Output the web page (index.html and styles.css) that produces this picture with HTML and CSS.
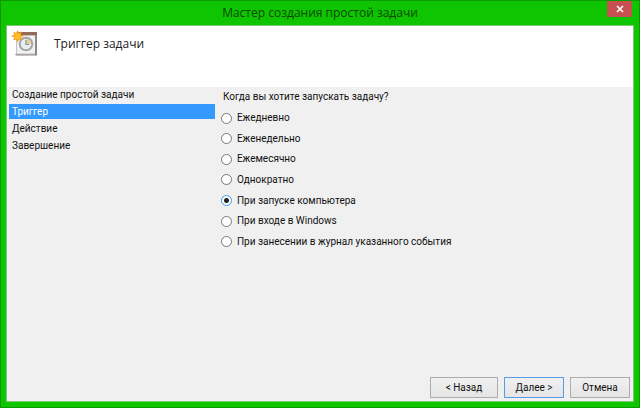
FILE: index.html
```html
<!DOCTYPE html>
<html lang="ru">
<head>
    <meta charset="UTF-8">
    <meta name="viewport" content="width=device-width, initial-scale=1.0">
    <title>Мастер создания простой задачи</title>
    <link rel="stylesheet" href="styles.css">
</head>
<body>
    <form class="window">
        <div class="titlebar">
            <h1 class="window-title">Мастер создания простой задачи</h1>
            <button type="button" class="close" aria-label="Закрыть">
                <svg width="8" height="8" viewBox="0 0 8 8"><path d="M1 1L7 7M7 1L1 7" stroke="#fff" stroke-width="1.6"/></svg>
            </button>
        </div>

        <div class="client">
            <header class="header">
                <svg class="task-icon" width="28" height="28" viewBox="0 0 28 28">
                    <path d="M4 24L5 25.5H26V24Z" fill="#8a8886"/>
                    <rect x="5.5" y="3.5" width="19" height="20.5" fill="#f3f2f1" stroke="#c4c1bf"/>
                    <path d="M24 4H26V25H24Z" fill="#8d8886"/>
                    <rect x="6" y="2" width="20" height="3" fill="#946a5b"/>
                    <path d="M6 5.5H24" stroke="#cdbab2"/>
                    <circle cx="15" cy="14" r="6.3" fill="#e9eef2" stroke="#a3a6a8" stroke-width="2"/>
                    <path d="M15 14V9A5 5 0 0 1 20 14Z" fill="#ead48c"/>
                    <path d="M15 10V14.5H18" fill="none" stroke="#7c93ab" stroke-width="1.2"/>
                    <path d="M6.5 0L7.9 3.1L11 1.6L9.9 4.8L13 6L9.9 7.5L11.2 10.6L8 9.4L6.5 12.5L5.1 9.4L2 10.6L3.3 7.5L0 6L3.3 4.7L2 1.5L5.1 3.1Z" fill="#f5a21b"/>
                    <circle cx="6.5" cy="6.2" r="3" fill="#ffbe2e"/>
                </svg>
                <h2 class="page-title">Триггер задачи</h2>
            </header>

            <div class="content">
                <ul class="steps">
                    <li class="step">Создание простой задачи</li>
                    <li class="step active" aria-current="step">Триггер</li>
                    <li class="step">Действие</li>
                    <li class="step">Завершение</li>
                </ul>

                <fieldset class="triggers">
                    <legend class="question">Когда вы хотите запускать задачу?</legend>
                    <div class="options">
                        <label class="option"><input type="radio" name="trigger">Ежедневно</label>
                        <label class="option"><input type="radio" name="trigger">Еженедельно</label>
                        <label class="option"><input type="radio" name="trigger">Ежемесячно</label>
                        <label class="option"><input type="radio" name="trigger">Однократно</label>
                        <label class="option"><input type="radio" name="trigger" checked>При запуске компьютера</label>
                        <label class="option"><input type="radio" name="trigger">При входе в Windows</label>
                        <label class="option"><input type="radio" name="trigger">При занесении в журнал указанного события</label>
                    </div>
                </fieldset>
            </div>

            <footer class="buttons">
                <button type="button" class="btn back">&lt; Назад</button>
                <button type="button" class="btn next">Далее &gt;</button>
                <button type="button" class="btn">Отмена</button>
            </footer>
        </div>
    </form>
</body>
</html>
```
FILE: styles.css
```css
* {
    box-sizing: border-box;
}
body {
    margin: 0;
    font-family: Roboto, "Open Sans", sans-serif;
    font-size: 10px;
    color: #111;
}
.window {
    display: flex;
    flex-direction: column;
    min-height: 100vh;
    padding: 0 5px 5px;
    background: #0fc400;
    border: 1px solid #0b9a00;
}
.titlebar {
    position: relative;
    height: 24px;
    text-align: center;
}
.window-title,
.page-title {
    margin: 0;
    font-family: "Open Sans", "Noto Sans", sans-serif;
    font-size: 12px;
    font-weight: normal;
    line-height: 24px;
}
.window-title {
    color: #0b4a06;
}
.close {
    position: absolute;
    top: 0;
    right: 2px;
    display: flex;
    align-items: center;
    justify-content: center;
    width: 25px;
    height: 16px;
    padding: 0;
    background: #c75050;
    border: none;
}
.client {
    display: flex;
    flex: 1;
    flex-direction: column;
    background: #f0f0f0;
    border: 1px solid #7fc87a;
}
.header {
    display: flex;
    align-items: flex-start;
    gap: 15px;
    height: 61px;
    padding: 4px;
    background: #fff;
}
.page-title {
    padding-top: 2px;
    color: #222;
}
.content {
    display: flex;
    flex: 1;
    gap: 6px;
    padding-left: 2px;
}
.steps {
    display: flex;
    flex-direction: column;
    gap: 2px;
    width: 33%;
    margin: 0;
    padding: 0;
    list-style: none;
}
.step {
    padding-left: 3px;
    line-height: 15px;
}
.step.active {
    background: #3399ff;
    color: #fff;
}
.triggers {
    flex: 1;
    min-width: 0;
    margin: 0;
    padding: 0;
    border: none;
}
.question {
    padding: 2px 0 0 2px;
    line-height: 16px;
}
.options {
    display: flex;
    flex-direction: column;
    justify-content: space-between;
    height: 140px;
    margin-top: 5px;
}
.option {
    display: flex;
    align-items: center;
    gap: 5px;
    line-height: 16px;
}
.option input {
    appearance: none;
    width: 11px;
    height: 11px;
    margin: 0;
    background: #fff;
    border: 1px solid #777;
    border-radius: 50%;
}
.option input:checked {
    background: radial-gradient(circle, #222 2px, #fff 3px);
    border-color: #3c9af0;
}
.buttons {
    display: flex;
    justify-content: flex-end;
    gap: 6px;
    padding: 3px;
}
.btn {
    width: 60px;
    height: 21px;
    padding: 0;
    background: linear-gradient(#f0f0f0, #e5e5e5);
    border: 1px solid #acacac;
    font: inherit;
    color: inherit;
}
.btn.back {
    width: 68px;
}
.btn.next {
    border-color: #569de5;
}
```
